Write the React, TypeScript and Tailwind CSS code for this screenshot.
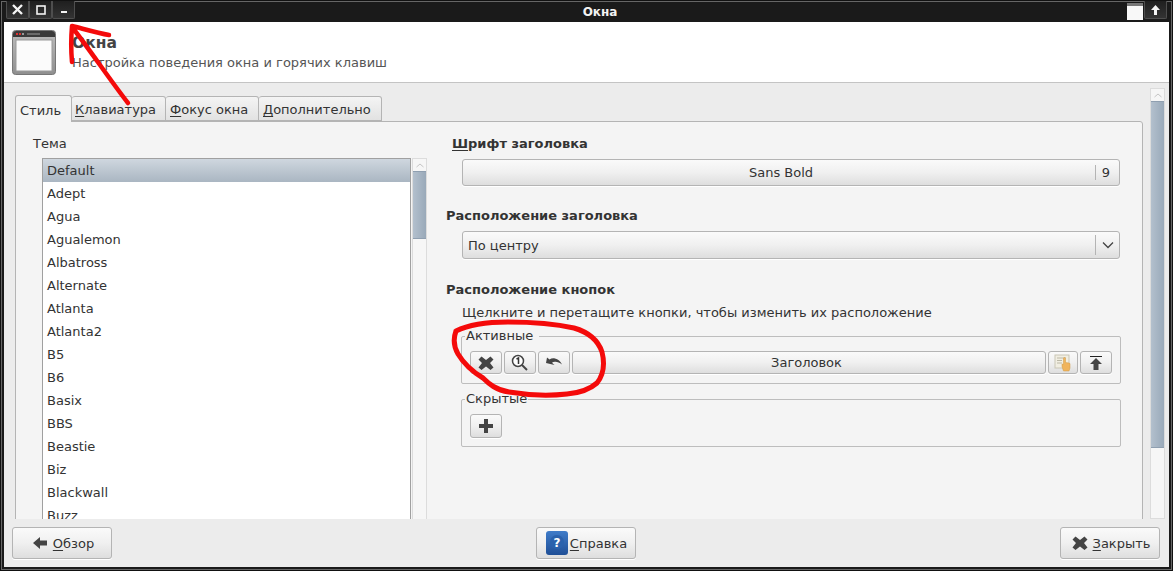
import type { ReactNode } from 'react';

const THEMES = ['Default', 'Adept', 'Agua', 'Agualemon', 'Albatross', 'Alternate', 'Atlanta', 'Atlanta2', 'B5', 'B6', 'Basix', 'BBS', 'Beastie', 'Biz', 'Blackwall', 'Buzz'];

const btn = 'flex items-center justify-center rounded-[3px] border border-[#b4b4b4] bg-gradient-to-b from-[#fafafa] via-[#f0f0f0] to-[#dedede] shadow-[0_1px_0_#fff]';

function WmButton({ children }: { children: ReactNode }) {
  return (
    <div className="flex h-[18px] w-[23px] items-center justify-center rounded-b-[2px] border border-t-0 border-[#4e4e4e] bg-gradient-to-b from-[#1f1f1f] to-[#333]">
      {children}
    </div>
  );
}

function CloseIcon({ size = 16, color = '#444' }: { size?: number; color?: string }) {
  return (
    <svg width={size} height={size} viewBox="0 0 16 16">
      <path d="M3.500 1.500 8 5l4.500-3.500 3 3L12 8l3.500 4.500-3 2.500L8 11.500 3.500 15l-3-2.500L4 8 .5 4.500z" fill={color} />
    </svg>
  );
}

function SmallWindowIcon() {
  return (
    <svg width="44" height="46" viewBox="0 0 44 46">
      <defs>
        <linearGradient id="frame" x1="0" y1="0" x2="0" y2="1">
          <stop offset="0" stopColor="#bdbdbd" />
          <stop offset="1" stopColor="#8f8f8f" />
        </linearGradient>
      </defs>
      <rect x="0.500" y="0.500" width="43" height="44" rx="3" fill="url(#frame)" stroke="#777" />
      <path d="M1 4a3 3 0 0 1 3-3h36a3 3 0 0 1 3 3v3H1z" fill="#3a3a3a" />
      <rect x="4" y="3" width="2" height="2" fill="#d33" />
      <rect x="7" y="3" width="2" height="2" fill="#d33" />
      <rect x="10" y="3" width="2" height="2" fill="#999" />
      <rect x="15" y="3.500" width="13" height="1" fill="#999" />
      <rect x="4" y="10" width="36" height="31" fill="#fbfbfb" stroke="#999" />
    </svg>
  );
}

function Tab({ label, mnemonic, width, inset = 'pl-[4px]', active }: { label: string; mnemonic?: string; width: string; inset?: string; active?: boolean }) {
  return (
    <div
      className={
        active
          ? `${width} ${inset} z-10 -mb-px flex h-[27px] items-center rounded-t-[3px] border border-b-0 border-[#b4b4b4] bg-[#f4f4f4] pt-[2px]`
          : `${width} ${inset} flex h-[25px] items-center rounded-t-[3px] border border-l-0 border-[#b4b4b4] bg-gradient-to-b from-[#f4f4f4] to-[#e2e2e2] pt-[2px]`
      }
    >
      <span>
        {mnemonic && <u className="underline-offset-2">{mnemonic}</u>}
        {label}
      </span>
    </div>
  );
}

function ScrollBar({ className, thumb, top }: { className: string; thumb: string; top: string }) {
  return (
    <div className={`${className} flex shrink-0 flex-col border border-[#dcdcdc] bg-[#f6f6f6]`}>
      <div className={`${top} flex shrink-0 items-center justify-center`}>
        <svg width="8" height="5" viewBox="0 0 8 5"><path d="M.5 4 4 1l3.500 3" fill="none" stroke="#c4c4c4" /></svg>
      </div>
      <div className={`${thumb} shrink-0 border-y border-[#8f9fb0] bg-gradient-to-r from-[#b3c0cd] to-[#99a9b9]`} />
      <div className="flex-1" />
    </div>
  );
}

export default function App() {
  return (
    <div className="relative h-[571px] w-[1173px] overflow-hidden bg-[#1a1a1a] font-['DejaVu_Sans',sans-serif] text-[13px] leading-none text-[#333] shadow-[inset_0_0_0_1px_#111,inset_0_0_0_2px_#666]">
      {/* Title bar */}
      <div className="flex h-[22px] items-start justify-between pl-[6px] pr-[6px] pt-px">
        <div className="flex">
          <WmButton>
            <svg width="13" height="13" viewBox="0 0 13 13"><path d="M2 2l9 9M11 2l-9 9" stroke="#f4f4f4" strokeWidth="2.400" /></svg>
          </WmButton>
          <WmButton>
            <svg width="10" height="10" viewBox="0 0 10 10"><rect x="1" y="1" width="8" height="8" fill="none" stroke="#f4f4f4" strokeWidth="1.600" /></svg>
          </WmButton>
          <WmButton>
            <svg width="8" height="8" viewBox="0 0 8 8"><rect x="1" y="5" width="6" height="2" fill="#f4f4f4" /></svg>
          </WmButton>
        </div>
        <div className="pr-[2px] pt-[5px] text-[12px] font-bold text-[#f2f2f2]">Окна</div>
        <div className="flex items-start gap-px">
          <div className="mt-[2px] h-[17px] w-[16px] border-t-[3px] border-[#777] bg-[#f8f8f8]" />
          <WmButton>
            <svg width="11" height="12" viewBox="0 0 11 12"><path d="M5.500 1 10 6H7v5H4V6H1z" fill="#f4f4f4" /></svg>
          </WmButton>
        </div>
      </div>

      {/* Window body */}
      <div className="mx-[4px] flex h-[545px] flex-col bg-[#ececec]">
        <div className="flex h-[61px] shrink-0 gap-[16px] border-b border-[#c4c4c4] bg-white pl-[8px] pt-[8px]">
          <SmallWindowIcon />
          <div className="flex flex-col">
            <div className="pt-[6px] text-[15.500px] font-bold text-[#444]">Окна</div>
            <div className="pt-[4px] text-[#555]">Настройка поведения окна и горячих клавиш</div>
          </div>
        </div>

        <div className="flex h-[436px] shrink-0 gap-[7px] overflow-hidden pl-[11px] pr-[4px] pt-[5px]">
          <div className="flex w-[1128px] shrink-0 flex-col pt-[7px]">
            <div className="flex items-end">
              <Tab label="Стиль" width="w-[57px]" active />
              <Tab mnemonic="К" label="лавиатура" width="w-[94px]" inset="pl-[3px]" />
              <Tab mnemonic="Ф" label="окус окна" width="w-[93px]" />
              <Tab mnemonic="Д" label="ополнительно" width="w-[123px]" />
            </div>
            <div className="flex h-[500px] shrink-0 rounded-tr-[3px] border border-[#b4b4b4] bg-[#f4f4f4]">
              {/* Theme list */}
              <div className="flex w-[430px] shrink-0 flex-col pl-[17px] pt-[15px]">
                <div>Тема</div>
                <div className="flex gap-[1px] pl-[9px] pt-[8px]">
                  <div className="h-[400px] w-[369px] border border-[#a0a0a0] bg-white">
                    {THEMES.map((name, i) => (
                      <div
                        key={name}
                        className={
                          i === 0
                            ? 'flex h-[23px] items-center bg-gradient-to-b from-[#cfd7df] to-[#aab6c2] pl-[4px]'
                            : 'flex h-[23px] items-center pl-[4px]'
                        }
                      >
                        {name}
                      </div>
                    ))}
                  </div>
                  <ScrollBar className="h-[400px] w-[15px]" top="h-[12px]" thumb="h-[68px]" />
                </div>
              </div>

              {/* Settings column */}
              <div className="flex flex-1 flex-col pt-[15px]">
                <div className="pl-[6px] font-bold"><u className="underline-offset-2">Ш</u>рифт заголовка</div>
                <div className="pl-[16px] pt-[9px]">
                  <div className={`${btn} h-[27px] w-[658px]`}>
                    <div className="flex-1 pl-[4px] text-center">Sans Bold</div>
                    <div className="h-[15px] w-[24px] border-l border-[#b4b4b4] pr-[3px] text-center leading-[15px]">9</div>
                  </div>
                </div>
                <div className="pt-[23px] font-bold">Расположение заголовка</div>
                <div className="pl-[16px] pt-[9px]">
                  <div className={`${btn} h-[28px] w-[658px] !justify-start pl-[5px]`}>
                    <div className="flex-1">По центру</div>
                    <div className="flex h-[20px] w-[24px] items-center justify-center border-l border-[#b4b4b4]">
                      <svg width="12" height="8" viewBox="0 0 12 8"><path d="M1 1.500 6 6.500l5-5" fill="none" stroke="#444" strokeWidth="1.300" /></svg>
                    </div>
                  </div>
                </div>
                <div className="pt-[24px] font-bold">Расположение кнопок</div>
                <div className="pl-[16px] pt-[10px]">Щелкните и перетащите кнопки, чтобы изменить их расположение</div>

                <fieldset className="ml-[15px] mt-[10px] h-[55px] w-[660px] rounded-[2px] border border-[#bdbdbd] px-[8px]">
                  <legend className="ml-[-5px] px-[1px] pb-[2px] pr-[6px]">Активные</legend>
                  <div className="mt-[7px] flex gap-[2px]">
                    <div className={`${btn} h-[23px] w-[32px]`}><CloseIcon /></div>
                    <div className={`${btn} h-[23px] w-[32px]`}>
                      <svg width="20" height="18" viewBox="0 0 20 18">
                        <circle cx="8" cy="7" r="5.500" fill="#fff" stroke="#444" strokeWidth="1.500" />
                        <path d="M6.500 5 8.500 4v6" fill="none" stroke="#333" strokeWidth="1.500" />
                        <path d="m12 11 5 5" stroke="#444" strokeWidth="2" />
                      </svg>
                    </div>
                    <div className={`${btn} h-[23px] w-[32px]`}>
                      <svg width="18" height="14" viewBox="0 0 18 14"><path d="M1 7 2 1.500 4.500 3.500C6 2.500 8 2 10 2.500c3 .5 5.500 2.500 7 6-2.500-2-5-3-7-2.800-1.300.1-2.300.5-3 1.100L9.500 9z" fill="#444" /></svg>
                    </div>
                    <div className={`${btn} h-[23px] w-[474px] pr-[5px]`}>Заголовок</div>
                    <div className={`${btn} h-[23px] w-[30px]`}>
                      <svg width="18" height="18" viewBox="0 0 18 18">
                        <rect x="1" y="1" width="14" height="13" fill="#f1eee2" stroke="#c9c6b5" />
                        <path d="M3 4h9M3 6.500h5M3 9h5" stroke="#bbb8a6" />
                        <path d="M9.500 17 8 12.500V10l1.500.500V4.500a1 1 0 0 1 2 0v4l3.500.500c.6 0 1 .5 1 1V14l-1 3z" fill="#f0b45c" stroke="#d19a45" strokeWidth=".5" />
                      </svg>
                    </div>
                    <div className={`${btn} h-[23px] w-[32px]`}>
                      <svg width="14" height="16" viewBox="0 0 14 16"><path d="M1 1.500h12" stroke="#222" /><path d="M7 3l6 6H9.500v6h-5V9H1z" fill="#444" /></svg>
                    </div>
                  </div>
                </fieldset>

                <fieldset className="ml-[15px] mt-[8px] h-[55px] w-[660px] rounded-[2px] border border-[#bdbdbd] px-[8px]">
                  <legend className="ml-[-5px] px-[1px] pb-[2px]">Скрытые</legend>
                  <div className={`${btn} mt-[7px] h-[24px] w-[32px]`}>
                    <svg width="16" height="16" viewBox="0 0 16 16"><path d="M6 1h4v5h5v4h-5v5H6v-5H1V6h5z" fill="#444" /></svg>
                  </div>
                </fieldset>
              </div>
            </div>
          </div>
          <ScrollBar className="h-[431px] w-[15px]" top="h-[12px]" thumb="h-[347px]" />
        </div>

        {/* Footer */}
        <div className="flex flex-1 items-start justify-between pl-[8px] pr-[9px] pt-[8px]">
          <div className={`${btn} h-[32px] w-[100px] gap-[5px] pl-[2px]`}>
            <svg width="16" height="14" viewBox="0 0 16 14"><path d="M1 7l7-6v3.500h7v5H8V13z" fill="#444" /></svg>
            <span><u className="underline-offset-2">О</u>бзор</span>
          </div>
          <div className={`${btn} h-[32px] w-[100px] gap-[1px]`}>
            <svg width="24" height="26" viewBox="0 0 24 26">
              <defs>
                <linearGradient id="help" x1="0" y1="0" x2="0" y2="1">
                  <stop offset="0" stopColor="#3f7cc9" />
                  <stop offset="1" stopColor="#1f4f97" />
                </linearGradient>
              </defs>
              <rect x="1" y="1" width="22" height="24" rx="3" fill="url(#help)" />
              <circle cx="12" cy="12" r="7" fill="#2a62ad" />
              <text x="12" y="16.500" textAnchor="middle" fontSize="12" fontWeight="700" fill="#fff" fontFamily="DejaVu Sans">?</text>
            </svg>
            <span><u className="underline-offset-2">С</u>правка</span>
          </div>
          <div className={`${btn} h-[32px] w-[100px] gap-[5px] pl-[2px]`}>
            <CloseIcon />
            <span><u className="underline-offset-2">З</u>акрыть</span>
          </div>
        </div>
      </div>

      {/* Red hand-drawn annotation */}
      <svg className="pointer-events-none absolute left-0 top-0" width="1173" height="571" viewBox="0 0 1173 571" fill="none" stroke="#f40a0a" strokeLinecap="round" strokeLinejoin="round">
        <path d="M128 103C110 80 90 50 72 27M72 26c12 3 26 7 37 9M72 26c-1 12-1 25 0 36" strokeWidth="4.500" />
        <path d="M456 331c12-6 32-9 52-9 25 0 48 2 66 6 14 4 24 12 28 24 3 12 2 22-5 31-8 7-18 10-30 11-18 2-40 1-58-2-13-2-20-8-26-14-10-6-19-14-25-24-4-7-5-15-2-23" strokeWidth="5" />
      </svg>
    </div>
  );
}
